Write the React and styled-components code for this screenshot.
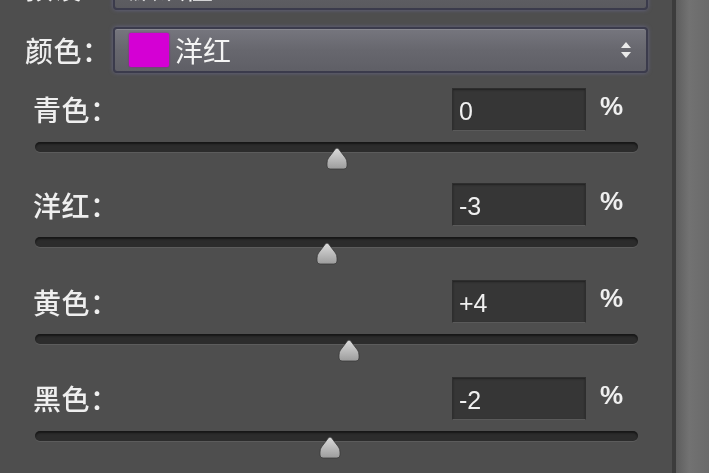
import React from "react";
import styled, { createGlobalStyle } from "styled-components";

const GlobalStyle = createGlobalStyle`
  html, body {
    margin: 0;
    padding: 0;
    background: #4e4e4e;
    overflow: hidden;
  }
  body {
    font-family: "Noto Sans CJK SC", "Liberation Sans", sans-serif;
    color: #efefef;
  }
`;

const Screen = styled.div`
  display: flex;
  width: 709px;
  height: 473px;
  overflow: hidden;
  filter: blur(0.7px);
`;

const Panel = styled.div`
  width: 672px;
  display: flex;
  flex-direction: column;
`;

const SideBar = styled.div`
  flex: 1;
  border-left: 4px solid #3c3c3c;
  background: linear-gradient(90deg, #5e5e5e, #727272 40%, #6a6a6a);
`;

const SelectRow = styled.div`
  display: flex;
  align-items: center;
  height: 46px;
  padding-left: 25px;
  margin-top: ${(p) => p.$top}px;
`;

const Label = styled.span`
  width: ${(p) => p.$width || 88}px;
  font-size: 28px;
  font-weight: 500;
  line-height: 1;
  letter-spacing: 0.5px;
`;

const Select = styled.div`
  display: flex;
  align-items: center;
  gap: 6px;
  width: 535px;
  height: 46px;
  box-sizing: border-box;
  padding: 0 14px;
  border: 2px solid #3b3b4c;
  border-radius: 4px;
  background: ${(p) =>
    p.$dim
      ? "linear-gradient(180deg, #68686d, #5a5a5f)"
      : "linear-gradient(180deg, #76767e 0%, #67676e 50%, #5f5f66 100%)"};
  box-shadow: 0 0 4px rgba(120, 120, 180, 0.55), inset 0 1px 0 #88888f;
  font-size: 28px;
  color: #f4f4f4;
`;

const Swatch = styled.span`
  width: 40px;
  height: 34px;
  background: #d400d4;
  border-radius: 2px;
  box-shadow: 0 0 2px #a000a0;
`;

const SelectText = styled.span`
  flex: 1;
  line-height: 1;
`;

const Arrows = styled.svg`
  width: 12px;
  height: 18px;
`;

const Group = styled.div`
  display: flex;
  flex-direction: column;
  height: ${(p) => p.$h}px;
`;

const Header = styled.div`
  display: flex;
  align-items: center;
  height: 43px;
  padding-left: 33px;
`;

const Spacer = styled.div`
  flex: 1;
`;

const ValueBox = styled.div`
  width: 134px;
  height: 43px;
  box-sizing: border-box;
  padding: 4px 0 0 6px;
  display: flex;
  align-items: center;
  background: #363636;
  border: 1px solid #2e2e2e;
  border-bottom-color: #5a5a5a;
  box-shadow: inset 0 1px 2px rgba(0, 0, 0, 0.4);
  font-family: "Liberation Sans", sans-serif;
  font-size: 25px;
  color: #f0f0f0;
`;

const Percent = styled.span`
  width: 86px;
  padding-left: 14px;
  box-sizing: border-box;
  font-family: "Liberation Sans", sans-serif;
  font-weight: bold;
  font-size: 26px;
  margin-top: -6px;
`;

const TrackArea = styled.div`
  position: relative;
  margin: 11px 0 0 35px;
  width: 603px;
`;

const Track = styled.div`
  height: 10px;
  border-radius: 5px;
  background: #2c2c2c;
  box-shadow: inset 0 2px 2px rgba(0, 0, 0, 0.5), 0 1px 0 #5c5c5c;
`;

const Thumb = styled.svg`
  position: absolute;
  top: 5px;
  width: 22px;
  height: 23px;
  margin-left: -11px;
`;

const rows = [
  { name: "青色", value: 0, h: 96 },
  { name: "洋红", value: -3, h: 98 },
  { name: "黄色", value: 4, h: 97 },
  { name: "黑色", value: -2, h: 97 },
];

function format(v) {
  if (v > 0) return "+" + v;
  return String(v);
}

function SliderRow({ name, value, h }) {
  // 0 sits in the middle of the track, about 3px per unit
  const pct = 50 + value * 0.5;
  return (
    <Group $h={h}>
      <Header>
        <Label>{name}：</Label>
        <Spacer />
        <ValueBox>{format(value)}</ValueBox>
        <Percent>%</Percent>
      </Header>
      <TrackArea>
        <Track />
        <Thumb viewBox="0 0 22 23" style={{ left: pct + "%" }}>
          <defs>
            <linearGradient id={"tg" + name} x1="0" y1="0" x2="0" y2="1">
              <stop offset="0" stopColor="#dcdcdc" />
              <stop offset="1" stopColor="#9c9c9c" />
            </linearGradient>
          </defs>
          <path
            d="M11 1 Q12 1 13 2.5 L19.5 11 Q21 13 21 16 L21 19 Q21 22 18 22 L4 22 Q1 22 1 19 L1 16 Q1 13 2.5 11 L9 2.5 Q10 1 11 1 Z"
            fill={"url(#tg" + name + ")"}
            stroke="#3a3a3a"
            strokeWidth="0.8"
          />
        </Thumb>
      </TrackArea>
    </Group>
  );
}

export default function App() {
  return (
    <>
      <GlobalStyle />
      <Screen>
        <Panel>
          <SelectRow $top={-36}>
            <Label>预设：</Label>
            <Select $dim>
              <SelectText>默认值</SelectText>
            </Select>
          </SelectRow>
          <SelectRow $top={17}>
            <Label>颜色：</Label>
            <Select>
              <Swatch />
              <SelectText>洋红</SelectText>
              <Arrows viewBox="0 0 12 18">
                <path d="M6 1 L11 7 L1 7 Z" fill="#eaeaea" />
                <path d="M6 17 L11 11 L1 11 Z" fill="#eaeaea" />
              </Arrows>
            </Select>
          </SelectRow>
          <div style={{ height: 15 }} />
          {rows.map((r) => (
            <SliderRow key={r.name} {...r} />
          ))}
        </Panel>
        <SideBar />
      </Screen>
    </>
  );
}
